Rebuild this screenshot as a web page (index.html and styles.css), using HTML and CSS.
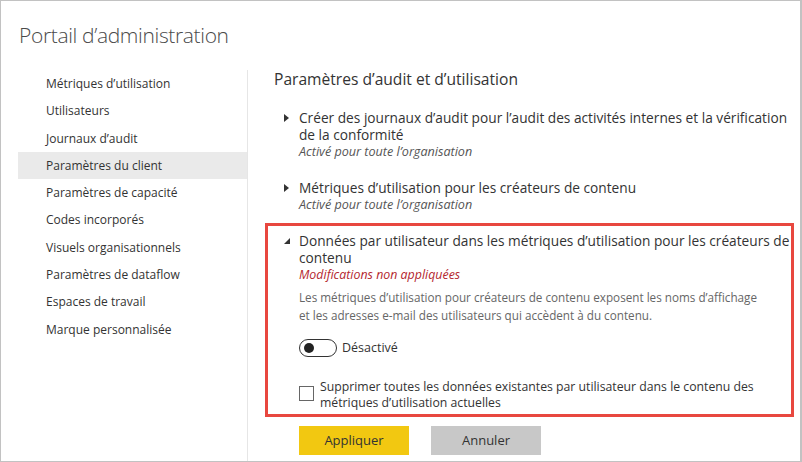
FILE: index.html
```html
<!DOCTYPE html>
<html lang="fr">
<head>
<meta charset="utf-8">
<title>Portail d'administration</title>
<link rel="stylesheet" href="styles.css">
</head>
<body>
<div class="frame">
  <h1 class="title">Portail d’administration</h1>
  <div class="layout">
    <nav class="sidebar">
      <div class="nav-item">Métriques d’utilisation</div>
      <div class="nav-item">Utilisateurs</div>
      <div class="nav-item">Journaux d’audit</div>
      <div class="nav-item selected">Paramètres du client</div>
      <div class="nav-item">Paramètres de capacité</div>
      <div class="nav-item">Codes incorporés</div>
      <div class="nav-item">Visuels organisationnels</div>
      <div class="nav-item">Paramètres de dataflow</div>
      <div class="nav-item">Espaces de travail</div>
      <div class="nav-item">Marque personnalisée</div>
    </nav>
    <main class="main">
      <h2 class="section-title">Paramètres d’audit et d’utilisation</h2>
      <div class="setting">
        <svg class="caret" width="8" height="10" viewBox="0 0 8 10"><path d="M1 1 L6 5 L1 9 Z" fill="#333"/></svg>
        <div class="setting-body">
          <div class="setting-name">Créer des journaux d’audit pour l’audit des activités internes et la vérification de la conformité</div>
          <div class="setting-status">Activé pour toute l’organisation</div>
        </div>
      </div>
      <div class="setting">
        <svg class="caret" width="8" height="10" viewBox="0 0 8 10"><path d="M1 1 L6 5 L1 9 Z" fill="#333"/></svg>
        <div class="setting-body">
          <div class="setting-name">Métriques d’utilisation pour les créateurs de contenu</div>
          <div class="setting-status">Activé pour toute l’organisation</div>
        </div>
      </div>
      <div class="setting open">
        <svg class="caret" width="8" height="10" viewBox="0 0 8 10"><path d="M7 2 L7 8 L1 8 Z" fill="#333"/></svg>
        <div class="setting-body">
          <div class="setting-name">Données par utilisateur dans les métriques d’utilisation pour les créateurs de contenu</div>
          <div class="setting-warning">Modifications non appliquées</div>
          <p class="setting-desc">Les métriques d’utilisation pour créateurs de contenu exposent les noms d’affichage et les adresses e-mail des utilisateurs qui accèdent à du contenu.</p>
          <div class="toggle-row">
            <span class="toggle"><span class="knob"></span></span>
            <span class="toggle-label">Désactivé</span>
          </div>
          <label class="check-row">
            <span class="checkbox"></span>
            <span class="check-label">Supprimer toutes les données existantes par utilisateur dans le contenu des métriques d’utilisation actuelles</span>
          </label>
        </div>
      </div>
      <div class="actions">
        <button class="btn primary">Appliquer</button>
        <button class="btn secondary">Annuler</button>
      </div>
    </main>
  </div>
</div>
</body>
</html>
```

FILE: styles.css
```css
* { box-sizing: border-box; }
html, body { margin: 0; padding: 0; background: #fff; }
body {
  font-family: "Open Sans", "Noto Sans", sans-serif;
  color: #333;
}
.frame {
  width: 802px;
  height: 462px;
  border: 1px solid #c2c2c2;
  border-right-width: 2px;
  overflow: hidden;
}
.title {
  margin: 0;
  padding: 20px 0 0 18px;
  height: 69px;
  font-weight: 300;
  font-size: 21px;
  line-height: 28px;
  color: #4a4a4a;
  letter-spacing: -0.35px;
}
.layout {
  display: flex;
  height: 392px;
}
.sidebar {
  width: 247px;
  padding-left: 17px;
  border-right: 1px solid #e6e6e6;
  flex-shrink: 0;
}
.nav-item {
  height: 27.3px;
  line-height: 27.3px;
  padding-left: 28px;
  font-size: 12px;
  color: #333;
  white-space: nowrap;
}
.nav-item.selected { background: #eaeaea; }
.main {
  flex: 1;
  padding: 0 6px 0 17px;
}
.section-title {
  margin: 0 0 12px 9px;
  font-weight: 400;
  font-size: 15.6px;
  line-height: 18px;
  color: #333;
}
.setting {
  display: flex;
  border: 3px solid transparent;
  padding: 6px 0 3px 15px;
  margin-bottom: 1px;
}
.setting.open { border-color: #e8473f; margin-top: 1px; padding-bottom: 3px; }
.caret { flex-shrink: 0; margin-top: 4px; }
.setting-body { margin-left: 8px; flex: 1; }
.setting-name {
  font-size: 13.7px;
  line-height: 17px;
  color: #333;
}
.setting-status {
  font-size: 12.6px;
  font-style: italic;
  line-height: 17px;
  color: #555;
  margin-bottom: 3px;
}
.setting-warning {
  font-size: 12.4px;
  font-style: italic;
  line-height: 15px;
  margin-top: 1px;
  color: #b4262e;
}
.setting-desc {
  margin: 5.5px 0 0;
  max-width: 470px;
  font-size: 11.7px;
  line-height: 18px;
  color: #666;
}
.toggle-row {
  display: flex;
  align-items: center;
  gap: 5px;
  margin-top: 15px;
}
.toggle {
  width: 38px;
  height: 18px;
  border: 1px solid #333;
  border-radius: 9px;
  display: flex;
  align-items: center;
  padding-left: 4px;
}
.knob { width: 10px; height: 10px; border-radius: 50%; background: #222; }
.toggle-label { font-size: 12.5px; color: #333; }
.check-row {
  display: flex;
  align-items: flex-start;
  gap: 6px;
  margin-top: 22px;
}
.checkbox {
  width: 15px;
  height: 15px;
  border: 1px solid #666;
  flex-shrink: 0;
  margin-top: 7px;
}
.check-label { font-size: 12.25px; line-height: 16px; color: #333; }
.actions {
  display: flex;
  gap: 22px;
  margin: 9px 0 0 34px;
}
.btn {
  width: 110px;
  height: 29px;
  border: none;
  font-family: inherit;
  font-size: 13px;
  color: #333;
}
.btn.primary { background: #f2c811; }
.btn.secondary { background: #c8c8c8; }
```
